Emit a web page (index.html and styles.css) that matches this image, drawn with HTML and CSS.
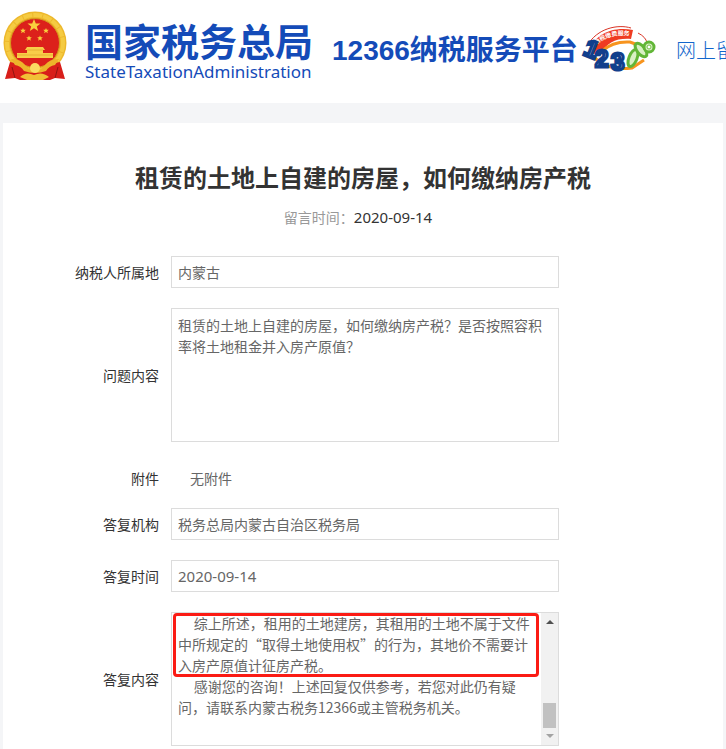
FILE: index.html
```html
<!DOCTYPE html>
<html lang="zh-CN">
<head>
    <meta charset="UTF-8">
    <meta name="viewport" content="width=device-width, initial-scale=1.0">
    <title>12366纳税服务平台</title>
    <link rel="stylesheet" href="styles.css">
</head>
<body>
    <header class="header">
        <svg class="emblem" viewBox="0 0 66 70" aria-hidden="true">
            <circle cx="32" cy="32" r="31.500" fill="#edb82c"/>
            <circle cx="32" cy="32" r="28" fill="none" stroke="#f5cb42" stroke-width="4" stroke-dasharray="9 1"/>
            <circle cx="32" cy="32" r="24.500" fill="#dc211b" stroke="#d59a1c"/>
            <g fill="#f9cf3d">
                <path d="M31 8l1.800 4.400h4.700l-3.700 3 1.400 4.600-4.200-2.700-4.200 2.700 1.400-4.600-3.700-3h4.700z"/>
                <path d="M20 17l.8 1.800h2l-1.500 1.400.6 2.100-1.900-1.200-1.900 1.200.6-2.100-1.500-1.400h2z"/>
                <path d="M43 17l.8 1.800h2l-1.500 1.400.6 2.100-1.900-1.200-1.900 1.200.6-2.100-1.500-1.400h2z"/>
                <path d="M26 24.500l.8 1.800h2l-1.500 1.400.6 2.100-1.900-1.200-1.900 1.200.6-2.100-1.500-1.400h2z"/>
                <path d="M37 24.500l.8 1.800h2l-1.500 1.400.6 2.100-1.900-1.200-1.900 1.200.6-2.100-1.500-1.400h2z"/>
            </g>
            <path d="M24 36h16l2 3h-2v3h10v5H14v-5h10v-3h-2z" fill="#f8ce49"/>
            <path d="M24 39h16M14 44h36" stroke="#e8b035"/>
            <path d="M7 51q8 1 13 6l12 4 12-4q5-5 13-6l5 17-10-1-5 2H17l-5-2-10 1z" fill="#d81e1a"/>
            <path d="M8 48q10 0 14 6l4 4q6 3 12 0l4-4q4-6 14-6l-4 6q-6 1-9 6-11 4-22 0-3-5-9-6z" fill="#edb42b"/>
            <circle cx="32" cy="57" r="5" fill="#fbdc62"/>
            <path d="M17 66q6-6 14-2 8-4 15 2l-6 3H24z" fill="#f1c036"/>
            <path d="M9 56l3 11M55 56l-3 11" stroke="#8f1512"/>
        </svg>
        <div class="brand">
            <div class="brand-name">国家税务总局</div>
            <div class="brand-english">StateTaxationAdministration</div>
        </div>
        <div class="platform">12366纳税服务平台</div>
        <svg class="hotline" viewBox="0 0 74 46" aria-hidden="true">
            <path d="M7 26C11 7 31-1 51 3l-2 9C35 11 24 15 19 28z" fill="#ef3b22"/>
            <path d="M5 19C15 1 36-3 49 1M56 6q8 4 9 10" fill="none" stroke="#d93425"/>
            <path d="M12 30Q24 44 50 41l12-8M20 24q11-10 28-9l8 3" fill="none" stroke="#f7941e" stroke-width="3"/>
            <path id="arc" d="M14 18Q27 6 49 9" fill="none"/>
            <text class="hotline-slogan"><textPath href="#arc">纳税缴费服务</textPath></text>
            <g class="hotline-digits">
                <text x="2" y="30" transform="rotate(22 8 24)">1</text>
                <text x="13" y="40">2</text>
                <text x="29" y="43">3</text>
            </g>
            <g fill="#d9f0c4" stroke="#62b637" stroke-width="3">
                <ellipse cx="51" cy="31" rx="4" ry="9" transform="rotate(22 51 31)"/>
                <ellipse cx="59" cy="23" rx="4" ry="8" transform="rotate(-38 59 23)"/>
                <circle cx="67" cy="20" r="5"/>
            </g>
            <circle cx="67" cy="20" r="2" fill="#fff" stroke="#72bf45"/>
        </svg>
        <a class="nav-link" href="#">网上留言</a>
    </header>

    <main class="card">
        <h1>租赁的土地上自建的房屋，如何缴纳房产税</h1>
        <p class="posted">留言时间：<time datetime="2020-09-14">2020-09-14</time></p>

        <form class="detail">
            <label for="region">纳税人所属地</label>
            <input id="region" type="text" value="内蒙古" readonly>

            <label for="question">问题内容</label>
            <textarea id="question" class="question" readonly>租赁的土地上自建的房屋，如何缴纳房产税？是否按照容积率将土地租金并入房产原值？</textarea>

            <label for="attachment">附件</label>
            <output id="attachment" class="attachment">无附件</output>

            <label for="agency">答复机构</label>
            <input id="agency" type="text" value="税务总局内蒙古自治区税务局" readonly>

            <label for="reply-date">答复时间</label>
            <input id="reply-date" class="date" type="text" value="2020-09-14" readonly>

            <label for="reply">答复内容</label>
            <div class="reply-box">
                <textarea id="reply" class="reply" readonly>     综上所述，租用的土地建房，其租用的土地不属于文件中所规定的“取得土地使用权”的行为，其地价不需要计入房产原值计征房产税。
     感谢您的咨询！上述回复仅供参考，若您对此仍有疑问，请联系内蒙古税务12366或主管税务机关。</textarea>
                <div class="scrollbar" aria-hidden="true">
                    <span class="arrow-up"></span>
                    <span class="thumb"></span>
                    <span class="arrow-down"></span>
                </div>
                <span class="highlight"></span>
            </div>
        </form>
    </main>
</body>
</html>
```

FILE: styles.css
```css
* {
    box-sizing: border-box;
}

body {
    margin: 0;
    background-color: #f4f5f7;
    color: #333;
    font-family: "Noto Sans CJK SC", sans-serif;
    font-size: 14px;
    line-height: 21px;
    overflow-x: hidden;
}

/* Header */
.header {
    display: flex;
    align-items: flex-start;
    height: 103px;
    padding: 11px 0 0 3px;
    background-color: #fff;
    color: #144bb8;
    white-space: nowrap;
    overflow: hidden;
}

.header > * {
    flex-shrink: 0;
}

.emblem {
    width: 66px;
    height: 70px;
}

.brand {
    width: 228px;
    margin: 10px 19px 0 16px;
}

.brand-name {
    font-size: 38px;
    font-weight: bold;
    line-height: 38px;
}

.brand-english {
    font-family: "Noto Sans", sans-serif;
    font-size: 17px;
    line-height: 26px;
}

.platform {
    width: 246px;
    margin: 23px 4px 0 0;
    font-family: "Liberation Sans", "Noto Sans CJK SC", sans-serif;
    font-size: 28px;
    font-weight: bold;
    line-height: 34px;
}

.hotline {
    width: 74px;
    height: 46px;
    margin-top: 16px;
    overflow: visible;
}

.hotline-slogan {
    font-size: 6px;
    font-weight: bold;
    fill: #fff;
}

.hotline-digits {
    font-family: "Liberation Sans", sans-serif;
    font-size: 24px;
    font-weight: bold;
    fill: #fff;
    stroke: #123f8c;
    stroke-width: 3px;
}

.nav-link {
    margin: 26px 0 0 20px;
    color: #1266cc;
    font-size: 20px;
    font-weight: 300;
    line-height: 26px;
    text-decoration: none;
}

/* Content */
.card {
    margin: 20px 3px 0;
    padding: 36px 0 3px;
    background-color: #fff;
}

h1 {
    margin: 0;
    font-size: 24px;
    line-height: 36px;
    text-align: center;
}

.posted {
    margin: 12px 0 28px;
    padding-right: 10px;
    color: #999;
    text-align: center;
}

.posted time {
    color: #333;
    font-family: "Noto Sans", sans-serif;
    font-size: 15px;
}

.detail {
    display: grid;
    grid-template-columns: 156px minmax(0, 388px);
    gap: 20px 12px;
    align-items: center;
}

.detail label {
    text-align: right;
}

input,
textarea {
    display: block;
    width: 100%;
    margin: 0;
    border: 1px solid #dcdcdc;
    border-radius: 0;
    background-color: #fff;
    color: #666;
    font: inherit;
    outline: none;
}

input {
    height: 32px;
    padding: 0 6px;
}

textarea {
    padding: 6px;
    resize: none;
}

.date {
    font-family: "Noto Sans", sans-serif;
    font-size: 15px;
}

.question {
    height: 134px;
}

.attachment {
    height: 26px;
    padding-left: 19px;
    color: #666;
    line-height: 32px;
}

.detail label[for="attachment"] {
    height: 26px;
    line-height: 32px;
}

.reply-box {
    display: flex;
    position: relative;
    height: 134px;
    border: 1px solid #dcdcdc;
}

.reply {
    flex: 1;
    width: auto;
    min-width: 0;
    padding: 0 6px;
    border: 0;
    overflow: hidden;
}

.scrollbar {
    display: flex;
    flex-direction: column;
    align-items: center;
    width: 17px;
    padding: 7px 0;
    background-color: #f1f1f1;
}

.arrow-up,
.arrow-down {
    border: 4px solid transparent;
}

.arrow-up {
    border-top: 0;
    border-bottom-color: #505050;
}

.arrow-down {
    border-bottom: 0;
    border-top-color: #a3a3a3;
}

.thumb {
    width: 13px;
    height: 25px;
    margin: auto 0 6px;
    background-color: #c1c1c1;
}

/* Marks the passage that answers the question */
.highlight {
    position: absolute;
    top: 0;
    left: 1px;
    right: 19px;
    height: 64px;
    border: 3px solid #fb1b14;
    border-radius: 4px;
    pointer-events: none;
}
```
